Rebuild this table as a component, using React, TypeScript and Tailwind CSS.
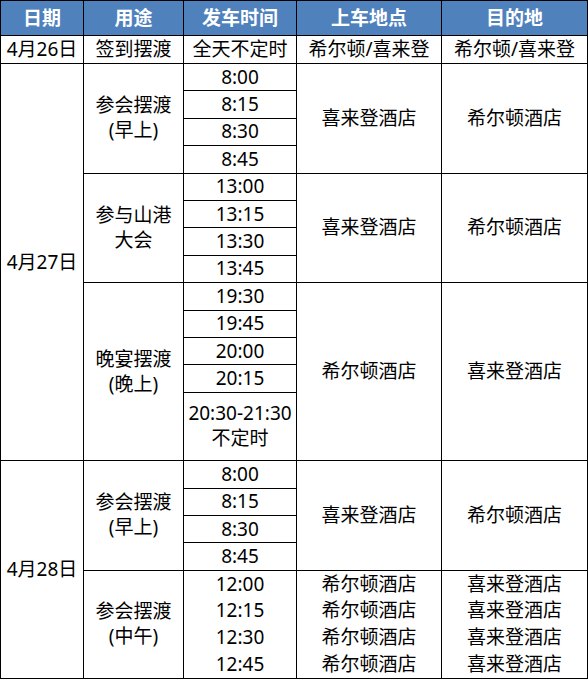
const font = { fontFamily: '"Noto Sans", "Noto Sans CJK SC", sans-serif' };

type Row = {
  date?: { text: string; span: number };
  use?: { lines: string[]; span: number };
  time: string[];
  from?: { text: string; span: number };
  to?: { text: string; span: number };
  tall?: boolean;
  open?: boolean;
  noon?: boolean;
};

const rows: Row[] = [
  { date: { text: "4月26日", span: 1 }, use: { lines: ["签到摆渡"], span: 1 }, time: ["全天不定时"], from: { text: "希尔顿/喜来登", span: 1 }, to: { text: "希尔顿/喜来登", span: 1 } },
  { date: { text: "4月27日", span: 13 }, use: { lines: ["参会摆渡", "(早上)"], span: 4 }, time: ["8:00"], from: { text: "喜来登酒店", span: 4 }, to: { text: "希尔顿酒店", span: 4 } },
  { time: ["8:15"] },
  { time: ["8:30"] },
  { time: ["8:45"] },
  { use: { lines: ["参与山港", "大会"], span: 4 }, time: ["13:00"], from: { text: "喜来登酒店", span: 4 }, to: { text: "希尔顿酒店", span: 4 } },
  { time: ["13:15"] },
  { time: ["13:30"] },
  { time: ["13:45"] },
  { use: { lines: ["晚宴摆渡", "(晚上)"], span: 5 }, time: ["19:30"], from: { text: "希尔顿酒店", span: 5 }, to: { text: "喜来登酒店", span: 5 } },
  { time: ["19:45"] },
  { time: ["20:00"] },
  { time: ["20:15"] },
  { time: ["20:30-21:30", "不定时"], tall: true },
  { date: { text: "4月28日", span: 8 }, use: { lines: ["参会摆渡", "(早上)"], span: 4 }, time: ["8:00"], from: { text: "喜来登酒店", span: 4 }, to: { text: "希尔顿酒店", span: 4 } },
  { time: ["8:15"] },
  { time: ["8:30"] },
  { time: ["8:45"] },
  { use: { lines: ["参会摆渡", "(中午)"], span: 4 }, time: ["12:00"], from: { text: "希尔顿酒店", span: 1 }, to: { text: "喜来登酒店", span: 1 }, open: true, noon: true },
  { time: ["12:15"], from: { text: "希尔顿酒店", span: 1 }, to: { text: "喜来登酒店", span: 1 }, open: true, noon: true },
  { time: ["12:30"], from: { text: "希尔顿酒店", span: 1 }, to: { text: "喜来登酒店", span: 1 }, open: true, noon: true },
  { time: ["12:45"], from: { text: "希尔顿酒店", span: 1 }, to: { text: "喜来登酒店", span: 1 }, noon: true },
];

const cell = "border border-black p-0 text-center align-middle";

function rowHeight(r: Row, i: number) {
  if (i === 0) return "h-[28px]";
  if (r.tall) return "h-[68.5px]";
  if (r.noon) return "h-[27px]";
  return "h-[27.4px]";
}

export default function App() {
  return (
    <div className="bg-white" style={font}>
      <table className="w-[587px] table-fixed border-collapse text-[19px] leading-[25px] text-black">
        <colgroup>
          <col className="w-[83px]" />
          <col className="w-[100px]" />
          <col className="w-[113px]" />
          <col className="w-[145px]" />
          <col className="w-[146px]" />
        </colgroup>
        <thead>
          <tr className="h-[35px] bg-[#4f81bd] font-bold text-white">
            {["日期", "用途", "发车时间", "上车地点", "目的地"].map((h) => (
              <th key={h} className={cell}>
                {h}
              </th>
            ))}
          </tr>
        </thead>
        <tbody>
          {rows.map((r, i) => {
            const edge = r.open ? "[border-bottom-style:hidden]" : "";
            return (
              <tr key={i} className={rowHeight(r, i)}>
                {r.date && (
                  <td rowSpan={r.date.span} className={cell}>
                    {r.date.text}
                  </td>
                )}
                {r.use && (
                  <td rowSpan={r.use.span} className={cell}>
                    {r.use.lines.map((l) => (
                      <div key={l}>{l}</div>
                    ))}
                  </td>
                )}
                <td className={`${cell} ${edge}`}>
                  {r.time.map((t) => (
                    <div key={t}>{t}</div>
                  ))}
                </td>
                {r.from && (
                  <td rowSpan={r.from.span} className={`${cell} ${edge}`}>
                    {r.from.text}
                  </td>
                )}
                {r.to && (
                  <td rowSpan={r.to.span} className={`${cell} ${edge}`}>
                    {r.to.text}
                  </td>
                )}
              </tr>
            );
          })}
        </tbody>
      </table>
    </div>
  );
}
